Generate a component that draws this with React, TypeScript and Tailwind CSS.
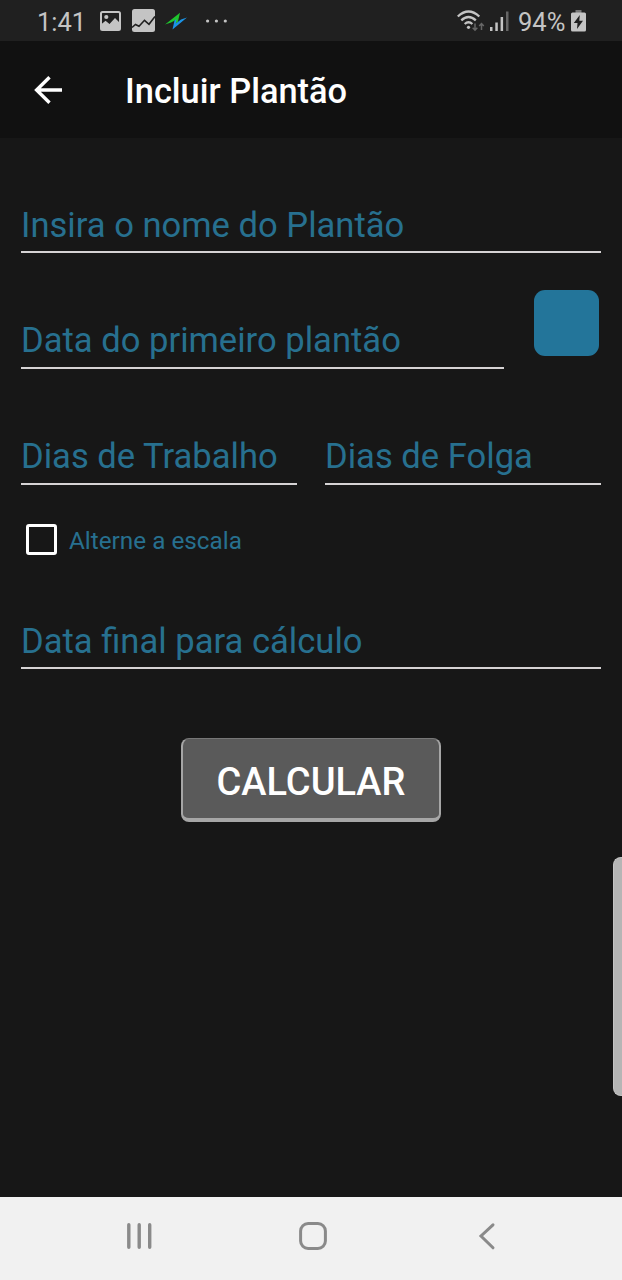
import { ReactNode } from "react"
import clsx from "clsx"

interface FieldProps {
    label: string
    className?: string
}

function Field({ label, className }: FieldProps) {
    return (
        <div
            className={clsx(
                "h-[50px] border-b-2 border-[#d6d3d4] text-[34.6px] leading-[41px] whitespace-nowrap text-[#27708f]",
                className
            )}
        >
            {label}
        </div>
    )
}

function StatusBar() {
    return (
        <div className="flex h-[41px] items-center justify-between bg-[#202020] pr-9 pl-[37px] text-[#c4c4c4]">
            <div className="flex items-center">
                <span className="w-[63px] pt-[3px] text-[25.5px] leading-[38px]">1:41</span>
                <svg width="21" height="20" viewBox="0 0 21 20" className="mr-[11px]">
                    <rect x="1" y="1" width="19" height="18" rx="1.500" fill="none" stroke="currentColor" strokeWidth="2" />
                    <circle cx="6.300" cy="6" r="2.100" fill="currentColor" />
                    <path d="M1 19v-5.500L5.500 9.800l4 3.200L15 7l5 5v7z" fill="currentColor" />
                </svg>
                <svg width="23" height="23" viewBox="0 0 23 23" className="mr-2.5">
                    <rect width="23" height="23" rx="2.500" fill="currentColor" />
                    <path d="M0 18.500L3.500 15.500l3.500 1.800 5.500-6 4.500 4L23 7.500" fill="none" stroke="#202020" strokeWidth="1.600" />
                </svg>
                <svg width="22" height="18" viewBox="0 0 22 18">
                    <path d="M0 12.500L15 0.700 12.800 10 9.500 12.500 10.800 8 6 10.500z" fill="#1fc52c" />
                    <path d="M22 5.500L7.500 17.500 9.500 8.500 11.500 7 10.800 11.500 16 7.500z" fill="#1b93e6" />
                </svg>
                <svg width="24" height="4" viewBox="0 0 24 4" className="ml-[18px]" fill="currentColor">
                    <circle cx="2.600" cy="2" r="1.600" />
                    <circle cx="11.400" cy="2" r="1.600" />
                    <circle cx="20.300" cy="2" r="1.600" />
                </svg>
            </div>
            <div className="flex items-center">
                <svg width="28" height="22" viewBox="0 0 28 22" className="mr-[5px]" fill="none" stroke="currentColor" strokeWidth="2.300">
                    <path d="M0.800 6.500Q11.500-3.500 22.300 6.500" />
                    <path d="M4.300 10.400Q11.500 3.600 18.800 10.400" />
                    <path d="M7.700 14Q11.500 10.600 15.400 14" />
                    <circle cx="11.500" cy="17.300" r="1.600" fill="currentColor" stroke="none" />
                    <path d="M18 13.500v6.500M15.700 17.700l2.300 2.500 2.300-2.500M24.500 20v-6.500M22.200 16l2.300-2.500 2.300 2.500" stroke="#666" strokeWidth="1.500" />
                </svg>
                <svg width="19" height="20" viewBox="0 0 19 20" className="mr-[9px]" fill="currentColor">
                    <path d="M0 16h2.500v4H0zM5.300 11.500h2.500V20H5.300zM10.600 6h2.500v14h-2.500z" />
                    <path d="M16 0.500h2.500V20H16z" fill="#666" />
                </svg>
                <span className="w-[53px] pt-[3px] text-[25.5px] leading-[38px]">94%</span>
                <svg width="15" height="22" viewBox="0 0 15 22">
                    <path d="M4.500 0h6v3h-6z" fill="#777" />
                    <rect y="2.500" width="15" height="19" rx="1.500" fill="currentColor" />
                    <path d="M8.800 5L2.800 13h3.700L6 19l6-8.300H8.300z" fill="#202020" />
                </svg>
            </div>
        </div>
    )
}

function Header() {
    return (
        <header className="flex h-[97px] items-center bg-[#111111] pl-[34px] text-white">
            <svg width="29" height="28" viewBox="0 0 29 28" className="mr-[62px]" fill="none" stroke="currentColor" strokeWidth="3.400">
                <path d="M28 14H3M15.500 1.300L2.600 14l12.900 12.700" />
            </svg>
            <h1 className="pt-[3px] text-[34.4px] leading-[41px] font-medium whitespace-nowrap">Incluir Plantão</h1>
        </header>
    )
}

function NavButton({ children }: { children: ReactNode }) {
    return <button className="flex h-7 w-7 items-center justify-center">{children}</button>
}

function NavBar() {
    return (
        <nav className="flex h-[83px] items-start justify-between bg-[#f1f1f1] pt-[25px] pr-[121px] pl-[125px] text-[#8a8a8a]">
            <NavButton>
                <svg width="28" height="28" viewBox="0 0 28 28" stroke="currentColor" strokeWidth="3.400" strokeLinecap="round">
                    <path d="M3.800 2.800v22.400M14.200 2.800v22.400M24.700 2.800v22.400" />
                </svg>
            </NavButton>
            <NavButton>
                <svg width="28" height="28" viewBox="0 0 28 28" fill="none" stroke="currentColor" strokeWidth="3">
                    <rect x="1.600" y="1.600" width="24.800" height="24.800" rx="7.500" />
                </svg>
            </NavButton>
            <NavButton>
                <svg width="28" height="28" viewBox="0 0 28 28" fill="none" stroke="currentColor" strokeWidth="3" strokeLinecap="round">
                    <path d="M20 2.800L8 14l12 11.800" />
                </svg>
            </NavButton>
        </nav>
    )
}

export default function App() {
    return (
        <div className="relative flex h-[1280px] w-[622px] flex-col overflow-hidden bg-[#171717] font-['Roboto',sans-serif]">
            <StatusBar />
            <Header />
            <main className="flex flex-1 flex-col px-[21px] pt-[65px]">
                <Field label="Insira o nome do Plantão" className="pt-0.5" />
                <div className="mt-[37px] flex justify-between">
                    <Field label="Data do primeiro plantão" className="mt-[29px] w-[483px] pt-px" />
                    <div className="mr-[2px] h-[66px] w-[65px] rounded-[11px] bg-[#23759a]" />
                </div>
                <div className="mt-[66px] grid grid-cols-2 gap-7">
                    <Field label="Dias de Trabalho" className="pt-px" />
                    <Field label="Dias de Folga" className="pt-px" />
                </div>
                <label className="mt-[38px] ml-[5px] flex h-8 items-center gap-3">
                    <span className="h-[31px] w-[31px] rounded-[3px] border-3 border-white" />
                    <span className="pt-[3px] text-[24.3px] leading-8 whitespace-nowrap text-[#27708f]">Alterne a escala</span>
                </label>
                <Field label="Data final para cálculo" className="mt-16 pt-0.5" />
                <button className="mt-[69px] ml-40 h-[84px] w-[260px] rounded-lg border-x-2 border-t border-b-4 border-[#a6a6a6] border-t-[#777] bg-[#5a5a5a] pt-[7px] text-[38px] font-medium text-white">
                    CALCULAR
                </button>
            </main>
            {/* edge panel handle */}
            <div className="absolute top-[857px] right-0 h-[239px] w-[9px] rounded-l-lg border border-r-0 border-[#c4c4c4] bg-[#b5b5b5]" />
            <NavBar />
        </div>
    )
}
